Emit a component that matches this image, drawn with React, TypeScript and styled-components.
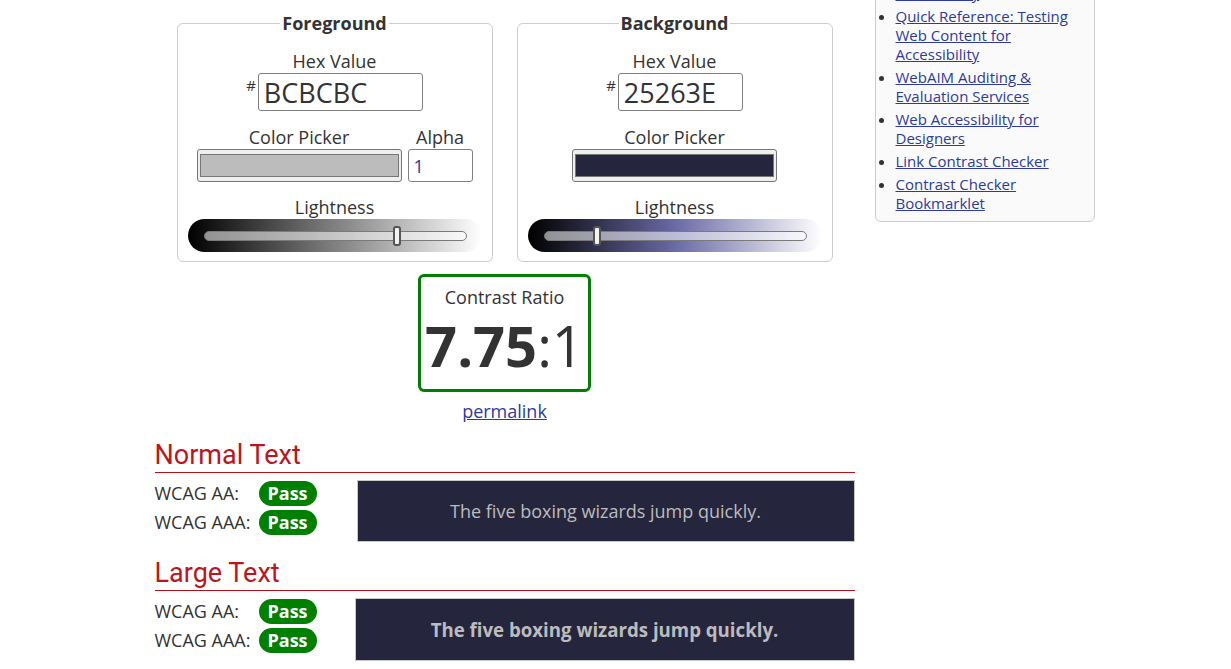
import styled, { createGlobalStyle } from 'styled-components'

const GlobalStyle = createGlobalStyle`
  html, body {
    margin: 0;
    padding: 0;
    background: #fff;
    overflow: hidden;
  }
  body {
    font-family: 'Open Sans', 'Liberation Sans', sans-serif;
    color: #333;
  }
  * {
    box-sizing: border-box;
  }
`

type ColorSide = {
  title: string
  hex: string
  hexWidth: number
  lightness: number
  gradient: string
  alpha?: boolean
}

const sides: ColorSide[] = [
  {
    title: 'Foreground',
    hex: 'BCBCBC',
    hexWidth: 165,
    lightness: 73.7,
    gradient: 'linear-gradient(to right, #000 0%, #808080 50%, #fff 100%)',
    alpha: true,
  },
  {
    title: 'Background',
    hex: '25263E',
    hexWidth: 125,
    lightness: 20,
    gradient: 'linear-gradient(to right, #000 0%, #6a6aa6 50%, #fff 100%)',
  },
]

const resources = [
  'Contrast and Color Accessibility',
  'Quick Reference: Testing Web Content for Accessibility',
  'WebAIM Auditing & Evaluation Services',
  'Web Accessibility for Designers',
  'Link Contrast Checker',
  'Contrast Checker Bookmarklet',
]

const SAMPLE = 'The five boxing wizards jump quickly.'

const App = () => {
  return (
    <>
      <GlobalStyle />
      <Page>
        <Main>
          <ColorRow>
            {sides.map((side) => (
              <ColorSet key={side.title}>
                <Legend>{side.title}</Legend>
                <Label $top={14}>Hex Value</Label>
                <HexRow>
                  <Hash>#</Hash>
                  <HexInput $width={side.hexWidth} defaultValue={side.hex} aria-label={`${side.title} hex value`} />
                </HexRow>
                <PickerRow>
                  <Column>
                    <Label>Color Picker</Label>
                    <Picker>
                      <Swatch $color={`#${side.hex}`} />
                    </Picker>
                  </Column>
                  {side.alpha && (
                    <Column>
                      <Label>Alpha</Label>
                      <AlphaInput defaultValue="1" aria-label="Alpha" />
                    </Column>
                  )}
                </PickerRow>
                <Label $top={13}>Lightness</Label>
                <Slider $gradient={side.gradient}>
                  <Track>
                    <Thumb style={{ left: `${side.lightness}%` }} />
                  </Track>
                </Slider>
              </ColorSet>
            ))}
          </ColorRow>

          <RatioBox>
            <RatioLabel>Contrast Ratio</RatioLabel>
            <Ratio>
              <b>7.75</b>:1
            </Ratio>
          </RatioBox>
          <Permalink href="#">permalink</Permalink>

          <SectionTitle>Normal Text</SectionTitle>
          <Results>
            <Checks>
              <Check>
                <CheckLabel>WCAG AA:</CheckLabel>
                <Pass>Pass</Pass>
              </Check>
              <Check>
                <CheckLabel>WCAG AAA:</CheckLabel>
                <Pass>Pass</Pass>
              </Check>
            </Checks>
            <Sample $offset={40} $height={62}>{SAMPLE}</Sample>
          </Results>

          <SectionTitle $top={15}>Large Text</SectionTitle>
          <Results>
            <Checks>
              <Check>
                <CheckLabel>WCAG AA:</CheckLabel>
                <Pass>Pass</Pass>
              </Check>
              <Check>
                <CheckLabel>WCAG AAA:</CheckLabel>
                <Pass>Pass</Pass>
              </Check>
            </Checks>
            <Sample $offset={38} $height={63} $large>
              {SAMPLE}
            </Sample>
          </Results>
        </Main>

        <Sidebar>
          <ResourceList>
            {resources.map((r) => (
              <li key={r}>
                <a href="#">{r}</a>
              </li>
            ))}
          </ResourceList>
        </Sidebar>
      </Page>
    </>
  )
}

const Page = styled.div`
  display: flex;
  gap: 20px;
  width: 960px;
  margin: 0 auto;
  padding: 0 0 0 19px;
`

const Main = styled.main`
  width: 700px;
  display: flex;
  flex-direction: column;
`

const ColorRow = styled.div`
  display: flex;
  justify-content: center;
  gap: 24px;
  margin-top: 11px;
  margin-left: 0;
`

const ColorSet = styled.fieldset`
  width: 315px;
  margin: 0;
  padding: 0 10px 9px;
  border: 1px solid #ccc;
  border-radius: 6px;
  display: flex;
  flex-direction: column;
  align-items: center;
`

const Legend = styled.legend`
  margin: 0 auto;
  padding: 0 2px;
  font-size: 18px;
  line-height: 24px;
  font-weight: 700;
  color: #333;
`

const Label = styled.div<{ $top?: number }>`
  margin-top: ${(p) => p.$top ?? 0}px;
  font-size: 18px;
  line-height: 24px;
  color: #333;
  text-align: center;
`

const HexRow = styled.div`
  display: flex;
  align-items: flex-start;
`

const Hash = styled.span`
  font-size: 15px;
  line-height: 1;
  margin: 5px 2px 0 0;
  color: #333;
`

const HexInput = styled.input<{ $width: number }>`
  width: ${(p) => p.$width}px;
  height: 38px;
  padding: 0 5px;
  border: 1px solid #808080;
  border-radius: 3px;
  font-family: 'Open Sans', 'Liberation Sans', sans-serif;
  font-size: 27px;
  color: #333;
  background: #fff;
  outline: none;
`

const PickerRow = styled.div`
  display: flex;
  gap: 6px;
  margin-top: 14px;
`

const Column = styled.div`
  display: flex;
  flex-direction: column;
  align-items: center;
`

const Picker = styled.div`
  width: 205px;
  height: 33px;
  padding: 4px 2px;
  background: #efefef;
  border: 1px solid #767676;
  border-radius: 3px;
`

const Swatch = styled.div<{ $color: string }>`
  width: 100%;
  height: 100%;
  background: ${(p) => p.$color};
  border: 1px solid #777;
`

const AlphaInput = styled.input`
  width: 65px;
  height: 33px;
  padding: 0 5px;
  border: 1px solid #808080;
  border-radius: 3px;
  font-family: 'Open Sans', 'Liberation Sans', sans-serif;
  font-size: 18px;
  color: #1f3c88;
  background: #fff;
  outline: none;
`

const Slider = styled.div<{ $gradient: string }>`
  width: 294px;
  height: 33px;
  padding: 0 15px 0 16px;
  border-radius: 17px;
  background: ${(p) => p.$gradient};
  display: flex;
  align-items: center;
`

const Track = styled.div`
  position: relative;
  flex: 1;
  height: 10px;
  border: 1px solid #7a7a7a;
  border-radius: 5px;
  background: rgba(255, 255, 255, 0.55);
`

const Thumb = styled.span`
  position: absolute;
  top: 50%;
  width: 8px;
  height: 20px;
  transform: translate(-50%, -50%);
  background: #f2f2f2;
  border: 2px solid #555;
  border-radius: 3px;
`

const RatioBox = styled.div`
  width: 173px;
  height: 118px;
  margin: 12px auto 0;
  padding-top: 8px;
  border: 3px solid #008000;
  border-radius: 6px;
  text-align: center;
`

const RatioLabel = styled.div`
  font-size: 18px;
  line-height: 24px;
  color: #333;
`

const Ratio = styled.div`
  margin-top: 4px;
  font-size: 56px;
  line-height: 64px;
  color: #333;
  b {
    font-weight: 700;
  }
`

const Permalink = styled.a`
  align-self: center;
  margin-top: 7px;
  font-size: 18px;
  line-height: 24px;
  color: #2d3a9f;
`

const SectionTitle = styled.h2<{ $top?: number }>`
  margin: ${(p) => p.$top ?? 16}px 0 0;
  padding-bottom: 1px;
  font-family: Roboto, 'Liberation Sans', sans-serif;
  font-size: 27px;
  line-height: 32px;
  font-weight: 400;
  color: #bb1620;
  border-bottom: 1px solid #b5121b;
`

const Results = styled.div`
  display: flex;
  align-items: flex-start;
  margin-top: 7px;
`

const Checks = styled.div`
  display: flex;
  flex-direction: column;
  gap: 4px;
  padding-top: 1px;
`

const Check = styled.div`
  display: flex;
  align-items: center;
`

const CheckLabel = styled.span`
  width: 104px;
  font-size: 18px;
  line-height: 25px;
  color: #333;
`

const Pass = styled.span`
  width: 58px;
  height: 25px;
  border-radius: 13px;
  background: #008000;
  color: #fff;
  font-size: 18px;
  line-height: 25px;
  font-weight: 700;
  text-align: center;
`

const Sample = styled.div<{ $offset: number; $height: number; $large?: boolean }>`
  flex: 1;
  margin-left: ${(p) => p.$offset}px;
  height: ${(p) => p.$height}px;
  display: flex;
  align-items: center;
  justify-content: center;
  background: #25263e;
  border: 1px solid #c8c8c8;
  color: #bcbcbc;
  font-size: ${(p) => (p.$large ? '18.66px' : '18px')};
  font-weight: ${(p) => (p.$large ? 700 : 400)};
`

const Sidebar = styled.aside`
  width: 220px;
  align-self: flex-start;
  margin-top: -44px;
  padding: 8px 10px 8px 0;
  background: #fafafa;
  border: 1px solid #ccc;
  border-radius: 6px;
`

const ResourceList = styled.ul`
  margin: 0;
  padding-left: 20px;
  font-size: 15px;
  line-height: 19px;

  li {
    margin-bottom: 4px;
  }
  li:last-child {
    margin-bottom: 0;
  }
  a {
    color: #2d3a9f;
  }
`

export default App
